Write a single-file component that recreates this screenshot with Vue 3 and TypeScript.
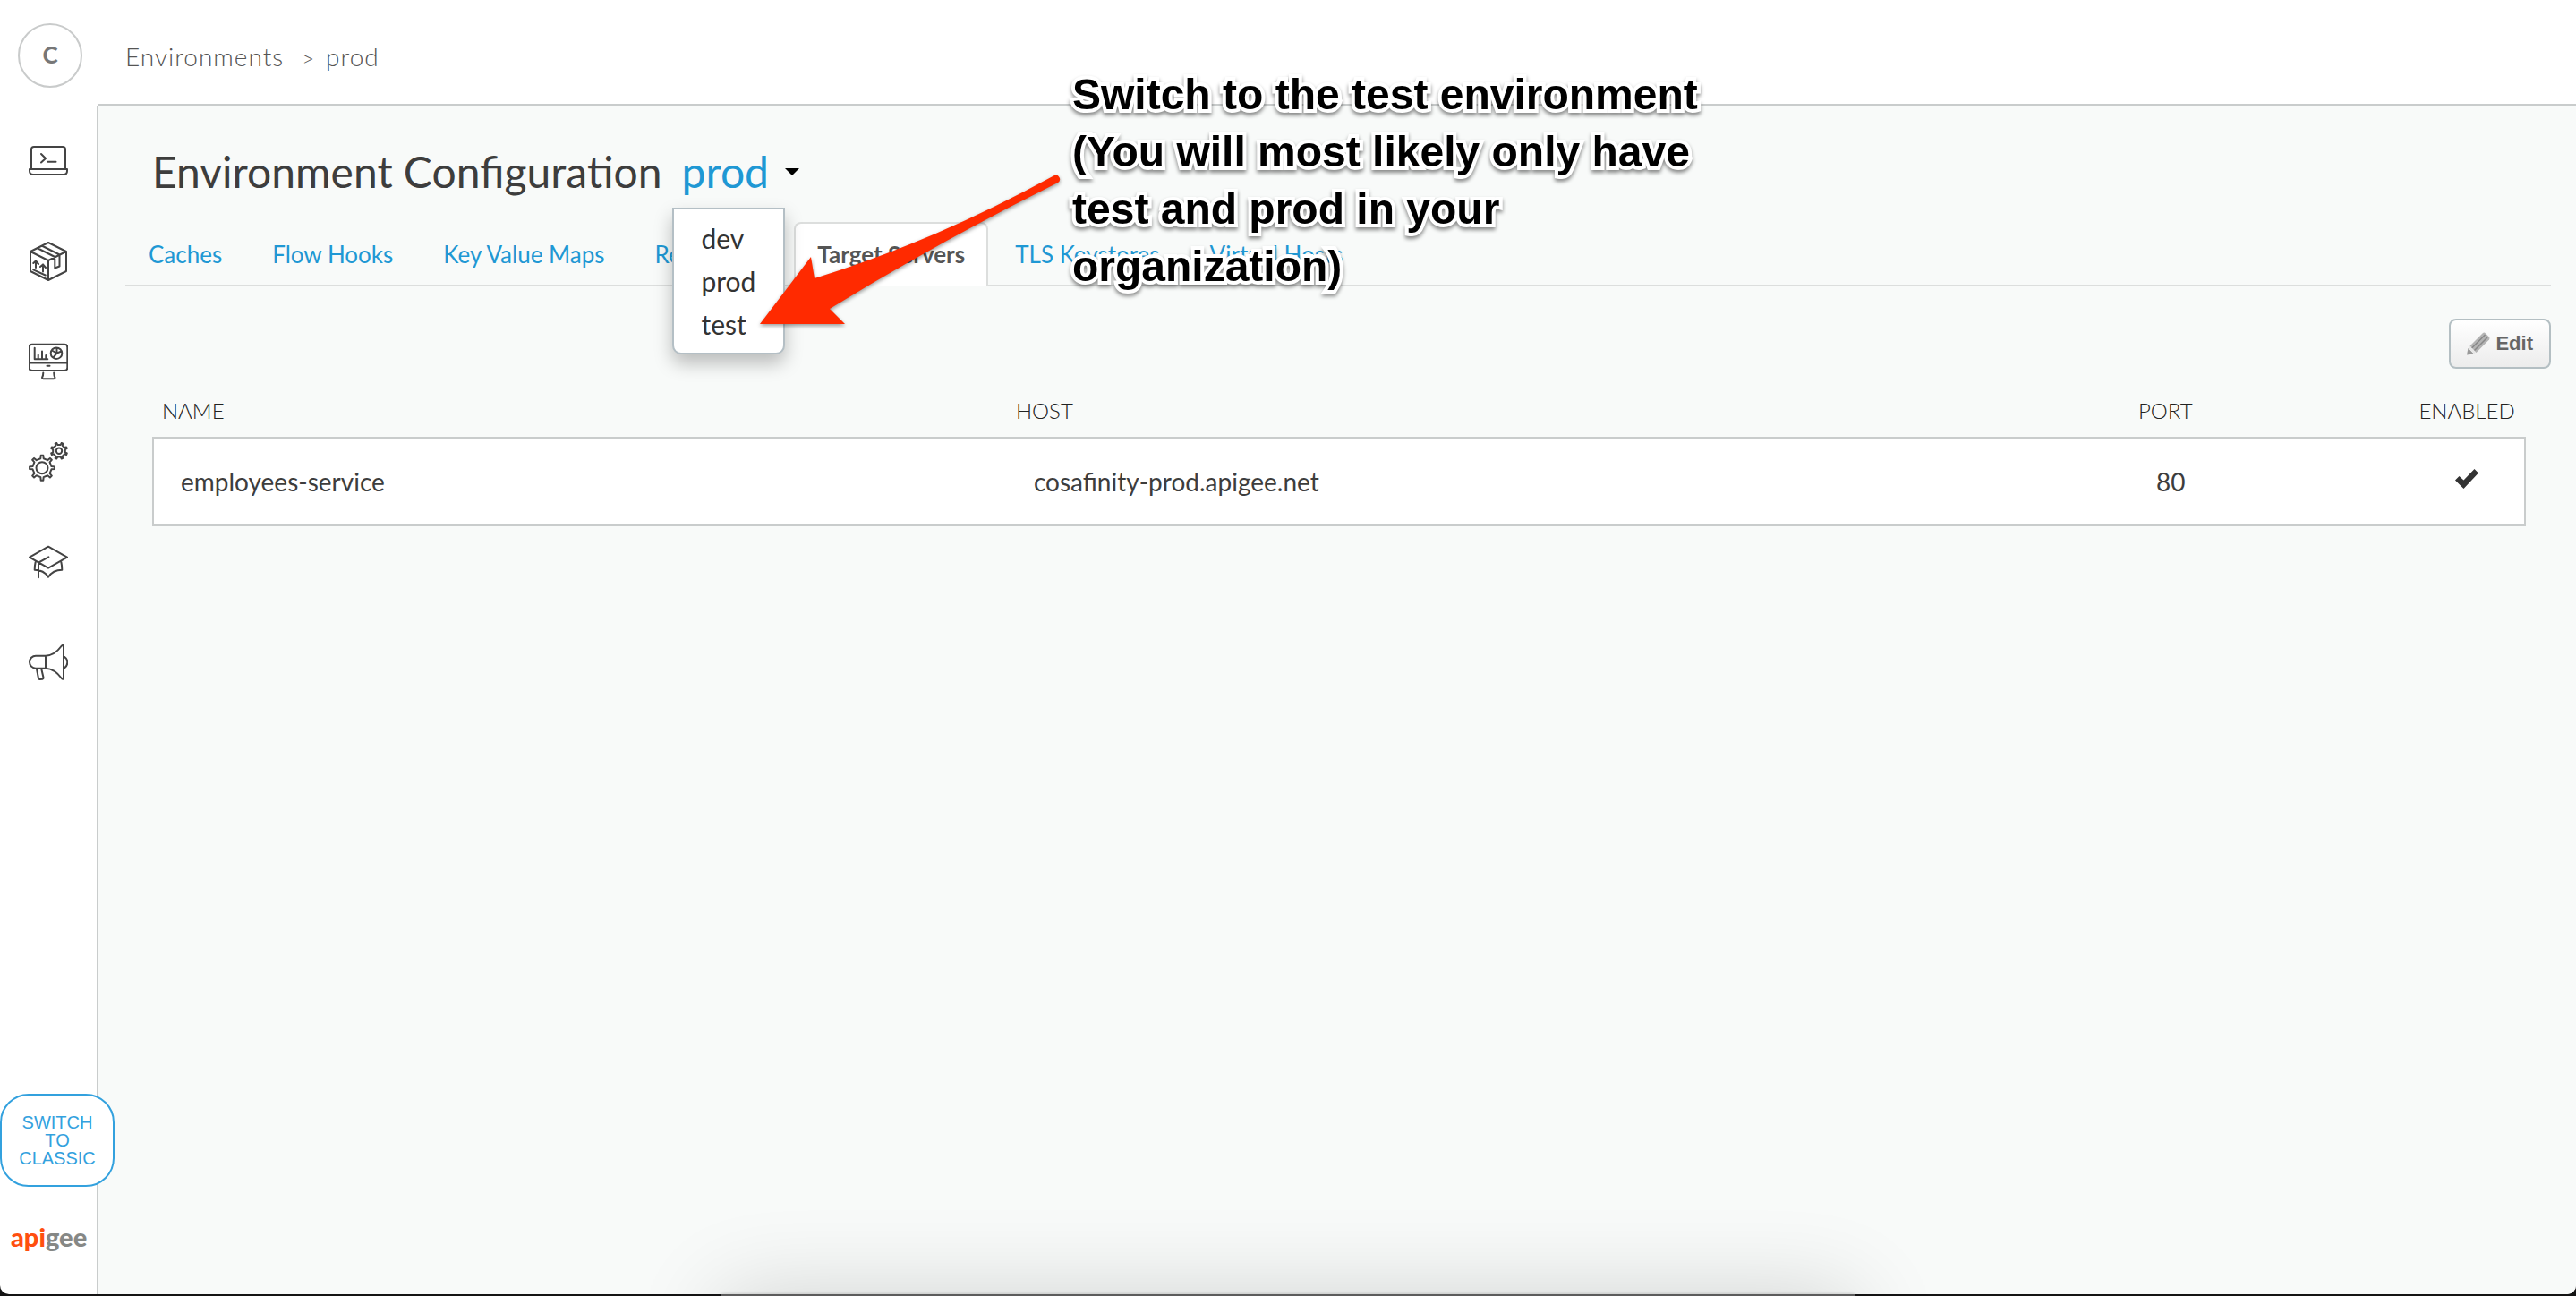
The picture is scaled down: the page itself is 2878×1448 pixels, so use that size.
<script setup lang="ts">
import { ref } from 'vue'

interface Server {
  name: string
  host: string
  port: number
  enabled: boolean
}

const environments = ['dev', 'prod', 'test']
const current = ref('prod')
const menuOpen = ref(true)

const tabs = ['Caches', 'Flow Hooks', 'Key Value Maps', 'References', 'Target Servers', 'TLS Keystores', 'Virtual Hosts']
const activeTab = ref('Target Servers')

const servers: Server[] = [
  { name: 'employees-service', host: 'cosafinity-prod.apigee.net', port: 80, enabled: true },
]

// Outline of a cog with eight rounded teeth; turn is a share of one tooth step
function cog(cx: number, cy: number, outer: number, inner: number, turn: number): string {
  const teeth = 8
  const step = (Math.PI * 2) / teeth
  const at = (r: number, a: number) => `${(cx + r * Math.cos(a)).toFixed(2)} ${(cy + r * Math.sin(a)).toFixed(2)}`
  let d = ''
  for (let i = 0; i < teeth; i++) {
    const a = (i + turn) * step
    d += `${i ? 'L' : 'M'}${at(inner, a - step * 0.2)}L${at(outer, a - step * 0.12)}L${at(outer, a + step * 0.12)}L${at(inner, a + step * 0.2)}`
    d += `L${at(inner, a + step * 0.8)}`
  }
  return d + 'Z'
}

const navItems = [
  {
    label: 'Develop',
    d: 'M3 30V9q0-3 3-3h32q3 0 3 3v21M1 31h42v2q0 4-4 4H5q-4 0-4-4zM14 14l5 5-5 4.500M21.500 22.700h9',
  },
  {
    label: 'Publish',
    d: 'M22 1L42 11V33L22 43L2 33V11ZM2 11L22 21L42 11M22 21V43M9.500 7L29.300 17V29.500L34.500 27.500V14.500L14.700 4.500M8 29V21.500M5.300 24L8 21.500L11 25M16 33.500V25.500M13 28L16 25.500L19 29M5.300 31.300L18.700 37.500',
  },
  {
    label: 'Analyze',
    d: 'M4 2.700h36q3.300 0 3.300 3.300v23q0 3-3.300 3H4q-3.300 0-3.300-3V6q0-3.300 3.300-3.300zM1 23.500h42M20.500 26.800h3M16.300 34.500q0 3-1.300 5.500q0 1.200 1.500 1.200h11.500q1.500 0 1.500-1.200q-1.300-2.500-1.300-5.500M6.700 6.700V19.300H21.300M10.700 19V14.500M15 19V10.500M19.300 19V15M37.300 12.700a6.300 6.300 0 1 1-12.600 0a6.300 6.300 0 1 1 12.600 0M31.500 6.700V12.700L36.500 10.500M31.500 12.700L26 9.500M31.500 12.700L27.500 17.500',
  },
  {
    label: 'Admin',
    d: cog(15, 28.7, 14, 10.6, 0) + 'M21.500 28.700a6.500 6.500 0 1 1-13 0a6.500 6.500 0 1 1 13 0' +
      cog(34, 9.7, 9.2, 7, 0.5) + 'M37.200 9.700a3.200 3.200 0 1 1-6.400 0a3.200 3.200 0 1 1 6.400 0',
  },
  {
    label: 'Learn',
    d: 'M1 16.700L22 4.700L43 16.700L22 28.700ZM22.300 16.300L11 22.700V39.300M7.700 21.700Q6.700 26 6.700 30.700Q17 30.700 22 38.700Q27 30.700 37.300 30.700Q37.300 26 36.300 21.700',
  },
  {
    label: 'Announcements',
    d: 'M19 14.700H8a7 7 0 0 0 0 14H19ZM19 14.700Q29 14.200 36.500 4Q39 1 39 5V38.500Q39 42.500 36.500 39.500Q29 29.200 19 28.700M40 15.700Q43.300 18 43.300 22T40 28.500M9 29.500L11 40Q11.300 41.200 12.600 41L15.500 40.700Q16.800 40.400 16.500 39L14.300 29.500',
  },
]
</script>

<template>
  <div class="screen">
    <div class="app">
      <aside class="sidebar">
        <div class="account">
          <button class="avatar" type="button" aria-label="Account">C</button>
        </div>
        <nav class="nav">
          <a v-for="item in navItems" :key="item.label" href="#" :aria-label="item.label">
            <svg viewBox="0 0 44 44"><path :d="item.d" /></svg>
          </a>
          <div class="nav-foot">
            <button class="classic" type="button">SWITCH<br />TO<br />CLASSIC</button>
            <a class="logo" href="#"><span>api</span>gee</a>
          </div>
        </nav>
      </aside>

      <div class="main">
        <header class="crumbs">
          <a href="#">Environments</a><span class="sep">&gt;</span><span>prod</span>
        </header>

        <main class="content">
          <div class="title">
            <h1>Environment Configuration</h1>
            <div class="picker">
              <button class="picker-btn" type="button" aria-haspopup="menu" :aria-expanded="menuOpen" @click="menuOpen = !menuOpen">
                {{ current }}<i class="caret"></i>
              </button>
              <ul v-if="menuOpen" class="menu">
                <li v-for="env in environments" :key="env">
                  <button type="button" @click="current = env">{{ env }}</button>
                </li>
              </ul>
            </div>
          </div>

          <nav class="tabs">
            <a v-for="tab in tabs" :key="tab" href="#" :class="{ active: tab === activeTab }" @click.prevent="activeTab = tab">{{ tab }}</a>
          </nav>

          <div class="toolbar">
            <button class="edit" type="button">
              <svg viewBox="0 0 26 26">
                <path d="M0 25.500L1.500 18L8 24.500Z" fill="#999" />
                <path d="M3.500 15.500L18 1Q19.500 0 21 1.500L25 5.500Q26 7 25 8.500L10.500 23Z" fill="#b4b4b4" />
                <path d="M5.500 18L20.500 3M8.500 20.500L23 6" stroke="#888" stroke-width="1.500" />
                <path d="M1.800 17.500L8.500 24.200L10 22.500L3.500 15.800Z" fill="#e6e6e6" />
              </svg>
              Edit
            </button>
          </div>

          <table class="servers">
            <colgroup>
              <col class="c-name" /><col /><col class="c-port" /><col class="c-enabled" />
            </colgroup>
            <thead>
              <tr><th>NAME</th><th>HOST</th><th>PORT</th><th class="mid">ENABLED</th></tr>
            </thead>
            <tbody>
              <tr v-for="s in servers" :key="s.name">
                <td>{{ s.name }}</td>
                <td>{{ s.host }}</td>
                <td>{{ s.port }}</td>
                <td class="mid">
                  <svg v-if="s.enabled" class="tick" viewBox="0 0 26 22" role="img" aria-label="Enabled">
                    <path d="M0 12.500L4.500 8L9.500 12.500L21.500 0L26 4.500L9.500 22Z" />
                  </svg>
                </td>
              </tr>
            </tbody>
          </table>
        </main>
      </div>
    </div>

    <svg class="arrow" viewBox="0 0 340 180">
      <path d="M8 171L65 96L69 120Q200 80 337 5A4.500 4.500 0 0 1 341 13Q210 78 86 154L103 171Z" />
    </svg>
    <p class="note">Switch to the test environment (You will most likely only have test and prod in your organization)</p>
    <div class="dock"></div>
  </div>
</template>

<style>
body {
  background: #141414;
}
</style>

<style scoped>
* {
  box-sizing: border-box;
}
.screen {
  position: relative;
  overflow: hidden;
  height: 100vh;
  padding-bottom: 2px;
  font-family: Lato, sans-serif;
  color: #3d3d3d;
}
.app {
  display: flex;
  height: 100%;
  background: #fff;
  border-radius: 0 0 10px 10px;
  overflow: hidden;
}
button {
  font: inherit;
  color: inherit;
  background: none;
  border: 0;
  padding: 0;
  cursor: pointer;
}
a {
  color: inherit;
  text-decoration: none;
}

.sidebar {
  flex: none;
  width: 110px;
  display: flex;
  flex-direction: column;
}
.account {
  height: 118px;
  padding: 26px 0 0 20px;
}
.avatar {
  width: 72px;
  height: 72px;
  padding-bottom: 2px;
  border: 2px solid #c9cbcb;
  border-radius: 50%;
  font-size: 26px;
  font-weight: 700;
  color: #777;
}
.nav {
  flex: 1;
  display: flex;
  flex-direction: column;
  gap: 68px;
  padding: 40px 0 0 32px;
  border-right: 2px solid #c9cccc;
}
.nav > a {
  height: 44px;
  width: 44px;
}
.nav svg {
  display: block;
  width: 44px;
  height: 44px;
  fill: none;
  stroke: #444;
  stroke-width: 2;
  stroke-linejoin: round;
  stroke-linecap: round;
}
.nav-foot {
  margin: auto 0 0 -32px;
  padding-bottom: 44px;
}
.classic {
  position: relative;
  z-index: 2;
  display: block;
  width: 128px;
  height: 104px;
  border: 2px solid #33a1de;
  border-radius: 32px;
  background: #fff;
  color: #33a1de;
  font: 20px/20px "Liberation Sans", Arial, sans-serif;
}
.logo {
  display: block;
  margin: 36px 0 0 12px;
  font-size: 29px;
  line-height: 40px;
  font-weight: 900;
  color: #868886;
}
.logo span {
  color: #ff4f0f;
}

.main {
  flex: 1;
  min-width: 0;
  display: flex;
  flex-direction: column;
}
.crumbs {
  height: 118px;
  padding: 43px 30px 0;
  border-bottom: 2px solid #c9cccc;
  font-size: 28px;
  line-height: 40px;
  font-weight: 300;
  color: #555;
  letter-spacing: 1px;
}
.sep {
  margin: 0 12px 0 20px;
  font-size: 24px;
}
.content {
  flex: 1;
  padding: 44px 28px 0 30px;
  background: #f8faf9;
}
.title {
  display: flex;
  align-items: baseline;
  gap: 22px;
  height: 86px;
  padding-left: 30px;
  font-size: 48px;
  line-height: 60px;
}
h1 {
  margin: 0;
  font-size: 48px;
  font-weight: 400;
}
.picker {
  position: relative;
}
.picker-btn {
  display: flex;
  align-items: center;
  gap: 18px;
  color: #1f98d4;
}
.caret {
  border: 8px solid transparent;
  border-top-color: #000;
  border-bottom: 0;
}
.menu {
  position: absolute;
  z-index: 3;
  top: 70px;
  left: -10px;
  width: 126px;
  margin: 0;
  padding: 8px 0;
  list-style: none;
  background: #fff;
  border: 2px solid #b4bfc5;
  border-radius: 0 0 10px 10px;
  box-shadow: 0 10px 20px rgba(0, 0, 0, 0.25);
}
.menu button {
  display: block;
  width: 100%;
  padding-left: 30px;
  text-align: left;
  font-size: 30px;
  line-height: 48px;
  color: #333;
}

.tabs {
  display: flex;
  gap: 4px;
  height: 72px;
  border-bottom: 2px solid #dcdedd;
}
.tabs a {
  height: 72px;
  padding: 0 24px;
  border: 2px solid transparent;
  border-bottom: 0;
  border-radius: 8px 8px 0 0;
  font-size: 26px;
  line-height: 68px;
  white-space: nowrap;
  color: #1f98d4;
}
.tabs a.active {
  background: #fff;
  border-color: #dcdedd;
  font-weight: 700;
  color: #555;
}

.toolbar {
  display: flex;
  justify-content: flex-end;
  padding: 36px 0 32px;
}
.edit {
  display: flex;
  align-items: center;
  gap: 6px;
  height: 56px;
  padding: 0 18px;
  border: 2px solid #b4bfc3;
  border-radius: 8px;
  background: linear-gradient(#fff, #ececec);
  font: 700 22px/30px "Liberation Sans", Arial, sans-serif;
  color: #666;
}
.edit svg {
  width: 26px;
  height: 26px;
}

.servers {
  width: calc(100% - 58px);
  margin-left: 30px;
  table-layout: fixed;
  border-collapse: collapse;
}
.c-name {
  width: 36%;
}
.c-port {
  width: 312px;
}
.c-enabled {
  width: 130px;
}
th {
  height: 44px;
  padding: 0 0 14px 10px;
  text-align: left;
  vertical-align: top;
  font-size: 24px;
  line-height: 30px;
  font-weight: 300;
  color: #222;
}
tbody {
  background: #fff;
  border: 2px solid #c9cccc;
}
td {
  height: 98px;
  padding: 0 0 0 30px;
  font-size: 28px;
  line-height: 40px;
}
.mid {
  padding-left: 0;
  text-align: center;
}
.tick {
  display: block;
  width: 26px;
  height: 22px;
  margin: 0 auto 6px;
  fill: #333;
}

.arrow {
  position: absolute;
  z-index: 4;
  top: 191px;
  left: 841px;
  width: 340px;
  height: 180px;
  overflow: visible;
  fill: #ff2a00;
  filter: drop-shadow(0 2px 2px rgba(0, 0, 0, 0.4));
}
.note {
  position: absolute;
  z-index: 4;
  top: 74px;
  left: 1198px;
  width: 720px;
  margin: 0;
  font: 700 48px/64px "Liberation Sans", Arial, sans-serif;
  color: #000;
  -webkit-text-stroke: 8px #fff;
  paint-order: stroke fill;
  stroke-linejoin: round;
  filter: drop-shadow(0 3px 2px rgba(0, 0, 0, 0.45));
}
.dock {
  position: absolute;
  left: 28%;
  right: 28%;
  bottom: -118px;
  height: 120px;
  background: #5c5c5c;
  box-shadow: 0 0 100px rgba(0, 0, 0, 0.16), 0 0 4px rgba(0, 0, 0, 0.2);
}
</style>
